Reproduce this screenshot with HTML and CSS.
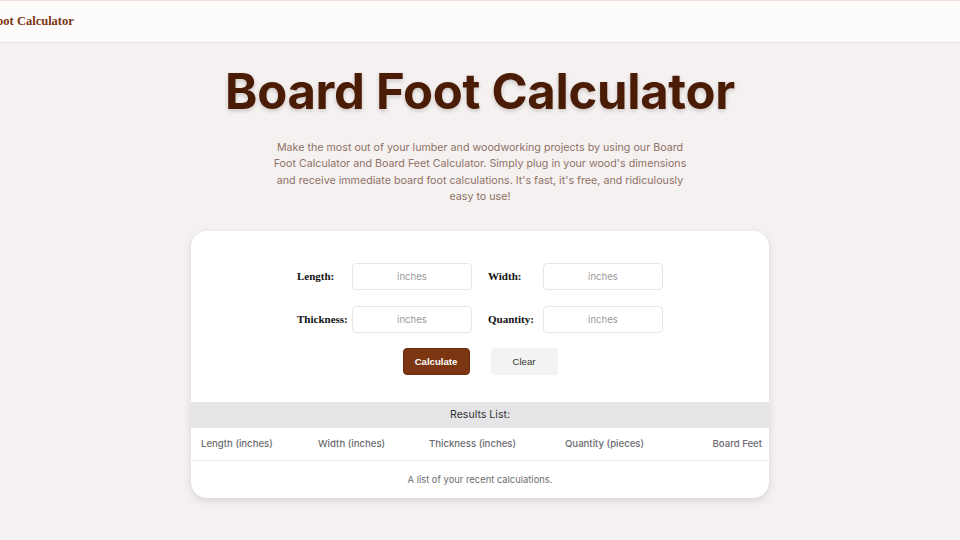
FILE: index.html
```html
<!DOCTYPE html>
<html lang="en">
<head>
<meta charset="utf-8">
<title>Board Foot Calculator</title>
<link rel="stylesheet" href="styles.css">
</head>
<body>
<header class="site-header">
  <span class="brand">Board Foot Calculator</span>
</header>
<main class="main">
  <h1 class="title">Board Foot Calculator</h1>
  <p class="intro">Make the most out of your lumber and woodworking projects by using our Board Foot Calculator and Board Feet Calculator. Simply plug in your wood's dimensions and receive immediate board foot calculations. It's fast, it's free, and ridiculously easy to use!</p>
  <section class="card">
    <form class="form">
      <div class="row">
        <div class="field"><label class="label">Length:</label><input class="input" placeholder="inches"></div>
        <div class="field"><label class="label">Width:</label><input class="input" placeholder="inches"></div>
      </div>
      <div class="row">
        <div class="field"><label class="label">Thickness:</label><input class="input" placeholder="inches"></div>
        <div class="field"><label class="label">Quantity:</label><input class="input" placeholder="inches"></div>
      </div>
      <div class="actions">
        <button type="button" class="btn btn-primary">Calculate</button>
        <button type="button" class="btn btn-secondary">Clear</button>
      </div>
    </form>
    <div class="results-title">Results List:</div>
    <div class="results-head">
      <span>Length (inches)</span>
      <span>Width (inches)</span>
      <span>Thickness (inches)</span>
      <span>Quantity (pieces)</span>
      <span class="right">Board Feet</span>
    </div>
    <div class="results-empty">A list of your recent calculations.</div>
  </section>
</main>
</body>
</html>
```
FILE: styles.css
```css
* { box-sizing: border-box; }
html, body { margin: 0; padding: 0; }
body {
  background: #f5f1f0;
  font-family: Inter, "Noto Sans", sans-serif;
  width: 960px;
  height: 540px;
  overflow: hidden;
}
.site-header {
  height: 43px;
  background: #fdfcfb;
  border-top: 1px solid #f1e1da;
  border-bottom: 1px solid #eae7e6;
  display: flex;
  align-items: center;
  overflow: hidden;
}
.brand {
  font-family: "Liberation Serif", "Times New Roman", serif;
  font-weight: bold;
  font-size: 12.5px;
  color: #7a3512;
  margin-left: -47px;
  white-space: nowrap;
}
.main {
  display: flex;
  flex-direction: column;
  align-items: center;
}
.title {
  margin: 19px 0 0;
  font-size: 49px;
  font-weight: 700;
  line-height: 60px;
  color: #4a1c06;
  letter-spacing: -0.3px;
  text-shadow: 0 2px 4px rgba(0,0,0,0.18);
}
.intro {
  margin: 18px 0 0;
  width: 418px;
  text-align: center;
  font-size: 10.7px;
  line-height: 16.4px;
  color: #8f7168;
}
.card {
  margin-top: 25px;
  width: 578px;
  background: #fff;
  border-radius: 16px;
  box-shadow: 0 3px 8px rgba(0,0,0,0.12);
  overflow: hidden;
}
.form {
  padding: 32px 0 27px;
  display: flex;
  flex-direction: column;
  align-items: center;
  gap: 16px;
}
.row {
  display: flex;
  gap: 16px;
}
.field {
  display: flex;
  align-items: center;
}
.label {
  width: 55px;
  font-family: "Liberation Serif", "Times New Roman", serif;
  font-weight: bold;
  font-size: 11px;
  color: #111;
  white-space: nowrap;
}
.input {
  width: 120px;
  height: 27px;
  border: 1px solid #e6e6e6;
  border-radius: 4px;
  text-align: center;
  font-family: Inter, sans-serif;
  font-size: 9.6px;
  color: #333;
  outline: none;
}
.input::placeholder { color: #9a9a9a; }
.actions {
  display: flex;
  gap: 21px;
  margin-top: -1px;
}
.btn {
  width: 67px;
  height: 27px;
  border: none;
  border-radius: 4px;
  font-family: "Liberation Sans", Arial, sans-serif;
  font-size: 9.6px;
  cursor: pointer;
}
.btn-primary {
  background: #7b3511;
  color: #fff;
  font-weight: bold;
  border: 1px solid #6a2c0c;
}
.btn-secondary {
  background: #f3f3f3;
  color: #333;
}
.results-title {
  background: #e5e5e7;
  height: 26px;
  display: flex;
  align-items: center;
  justify-content: center;
  font-size: 10.6px;
  color: #333;
}
.results-head {
  display: grid;
  grid-template-columns: 117px 111px 136px 144px 1fr;
  align-items: center;
  height: 33px;
  padding: 0 7px 0 10px;
  border-bottom: 1px solid #ececec;
  font-size: 9.6px;
  font-weight: 500;
  color: #6b6b70;
  white-space: nowrap;
}
.results-head .right { text-align: right; }
.results-empty {
  height: 37px;
  display: flex;
  align-items: center;
  justify-content: center;
  font-size: 9.4px;
  color: #6e6e6e;
}
```
